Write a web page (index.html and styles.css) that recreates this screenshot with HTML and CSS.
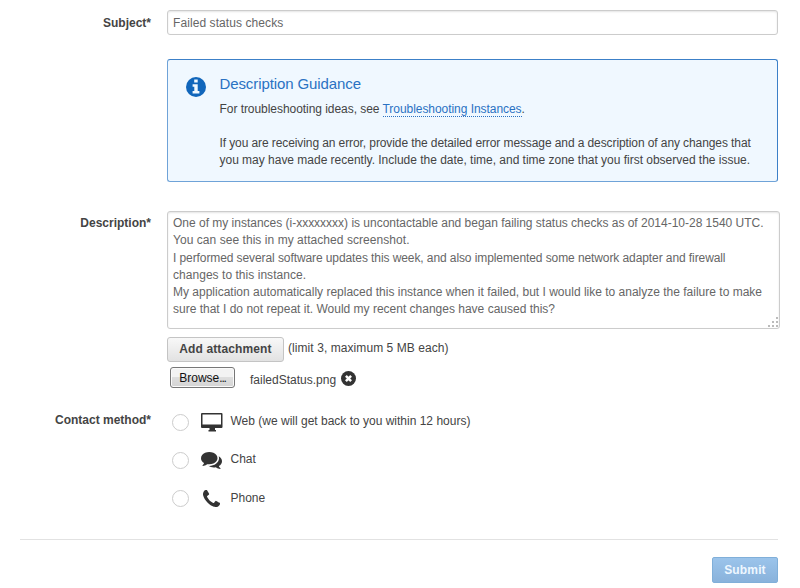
FILE: index.html
```html
<!DOCTYPE html>
<html lang="en">
<head>
<meta charset="utf-8">
<title>Create case</title>
<link rel="stylesheet" href="styles.css">
</head>
<body>
<form class="case-form">
  <div class="row subject-row">
    <label class="label" for="subject">Subject*</label>
    <input class="text-input" id="subject" type="text" value="Failed status checks">
  </div>
  <section class="guidance">
    <svg class="info-icon" viewBox="0 0 20 20"><circle cx="10" cy="10" r="10"/><path fill="#f0f8ff" d="M8.2 2.4h3.5v3.2H8.200zM6.600 7.200h5.100v6.800h1.700v2.600H6.600v-2.600h1.700V9.700H6.600z"/></svg>
    <div class="guidance-body">
      <h2>Description Guidance</h2>
      <p class="ideas">For troubleshooting ideas, see <a href="#">Troubleshooting Instances</a>.</p>
      <p class="hint"><span class="line h1">If you are receiving an error, provide the detailed error message and a description of any changes that</span><span class="line h2">you may have made recently. Include the date, time, and time zone that you first observed the issue.</span></p>
    </div>
  </section>
  <div class="row description-row">
    <div class="label">Description*</div>
    <div class="description">
      <span class="line d1">One of my instances (i-xxxxxxxx) is uncontactable and began failing status checks as of 2014-10-28 1540 UTC.</span>
      <span class="line d2">You can see this in my attached screenshot.</span>
      <span class="line d3">I performed several software updates this week, and also implemented some network adapter and firewall</span>
      <span class="line d4">changes to this instance.</span>
      <span class="line d5">My application automatically replaced this instance when it failed, but I would like to analyze the failure to make</span>
      <span class="line d6">sure that I do not repeat it. Would my recent changes have caused this?</span>
      <svg class="grip" viewBox="0 0 11 11"><path d="M8 0h2v2H8zM4 4h2v2H4zM8 4h2v2H8zM0 8h2v2H0zM4 8h2v2H4zM8 8h2v2H8z"/></svg>
    </div>
  </div>
  <div class="attach">
    <button class="add" type="button">Add attachment</button>
    <span class="limit">(limit 3, maximum 5 MB each)</span>
  </div>
  <div class="file">
    <button class="browse" type="button">Browse<span class="dots">...</span></button>
    <span class="filename">failedStatus.png</span>
    <svg class="remove" viewBox="0 0 15 15"><circle cx="7.5" cy="7.5" r="7.5"/><path d="M4.9 4.9l5.2 5.2M10.1 4.9l-5.2 5.2" stroke="#fff" stroke-width="2.5"/></svg>
  </div>
  <div class="row contact-row">
    <div class="label">Contact method*</div>
    <div class="methods">
      <label class="method"><input type="radio" name="m"><svg class="icon web" viewBox="0 0 22 19"><path fill-rule="evenodd" d="M1 0h19.500q1 0 1 1v13q0 1-1 1h-6.500v2h1v1.500H7.500V17H8.500v-2H1q-1 0-1-1V1q0-1 1-1zM1.500 1.500v10h18.500v-10z"/></svg><span class="web-text">Web (we will get back to you within 12 hours)</span></label>
      <label class="method"><input type="radio" name="m"><svg class="icon chat" viewBox="0 256 1792 1408" preserveAspectRatio="none"><path d="M1408 768q0 139-94 257t-256.5 186.5-353.5 68.5q-86 0-176-16-124 88-278 128-36 9-86 16h-3q-11 0-20.5-8t-11.5-21q-1-3-1-6.5t.5-6.5 2-6l2.5-5 3.5-5.5 4-5 4.5-5 4-4.5q5-6 23-25t26-29.5 22.5-29 25-38.5 20.5-44q-124-72-195-177t-71-224q0-139 94-257t256.5-186.5 353.5-68.5 353.5 68.5 256.5 186.5 94 257zm384 256q0 120-71 224.5t-195 176.5q10 24 20.5 44t25 38.5 22.5 29 26 29.5 23 25q1 1 4 4.5t4.5 5 4 5 3.5 5.5l2.5 5 2 6 .5 6.5-1 6.5q-3 14-13 22t-22 7q-50-7-86-16-154-40-278-128-90 16-176 16-271 0-472-132 58 4 88 4 161 0 309-45t264-129q125-92 192-212t67-254q0-77-23-152 129 71 204 178t75 230z"/></svg><span>Chat</span></label>
      <label class="method"><input type="radio" name="m"><svg class="icon phone" viewBox="0 128 1408 1408"><path d="M1408 1240q0 27-10 70.5t-21 68.5q-21 50-122 106-94 51-186 51-27 0-53-3.500t-57.500-12.500-47-14.500-55.500-20.500-49-18q-98-35-175-83-127-79-264-216t-216-264q-48-77-83-175-3-9-18-49t-20.500-55.500-14.500-47-12.500-57.500-3.500-53q0-92 51-186 56-101 106-122 25-11 68.500-21t70.500-10q14 0 21 3 18 6 53 76 11 19 30 54t35 63.500 31 53.500q3 4 17.500 25t21.500 35.500 7 28.500q0 20-28.500 50t-62 55-62 53-28.500 46q0 9 5 22.500t8.500 20.500 14 24 11.500 19q76 137 174 235t235 174q2 1 19 11.500t24 14 20.500 8.500 22.500 5q18 0 46-28.500t53-62 55-62 50-28.500q14 0 28.500 7t35.500 21.500 25 17.500q25 15 53.500 31t63.500 35 54 30q70 35 76 53 3 7 3 21z"/></svg><span class="phone-text">Phone</span></label>
    </div>
  </div>
  <div class="footer"><button class="submit" type="button">Submit</button></div>
</form>
</body>
</html>
```
FILE: styles.css
```css
* { box-sizing: border-box; }
body {
  margin: 0;
  background: #fff;
  color: #444;
  font: 12px/17.25px "Liberation Sans", Arial, sans-serif;
}
button, input { font: inherit; margin: 0; }
p, h2 { margin: 0; }
svg { display: block; flex: none; }
.case-form { padding: 10px 22px 0 20px; }
.row { display: grid; grid-template-columns: 131px 1fr; column-gap: 16px; }
.label { font-weight: bold; text-align: right; padding-top: 4px; color: #444; }
.subject-row .label { padding-top: 5px; }
.text-input {
  height: 25px;
  width: 611px;
  padding: 0 5px;
  border: 1px solid #ccc;
  border-radius: 3px;
  box-shadow: inset 0 1px 2px #e4e4e4;
  color: #666;
  letter-spacing: 0.08px;
}
.guidance {
  display: flex;
  gap: 14px;
  width: 611px;
  height: 123px;
  margin: 24px 0 0 147px;
  padding: 16px 0 0 18px;
  border: 1px solid #3c80c8;
  border-left-color: #6fa3d8;
  border-bottom-color: #6fa3d8;
  border-radius: 3px;
  background: #f0f8ff;
}
.info-icon { width: 20px; height: 20px; fill: #1166bb; margin-top: 1px; }
.guidance-body { margin-left: -0.5px; }
.guidance h2 { margin-top: -1px; font-size: 15px; line-height: 17px; font-weight: normal; color: #2a72c3; letter-spacing: -0.1px; }
.ideas { margin-top: 9px; letter-spacing: -0.05px; }
.hint { margin-top: 17px; line-height: 17px; }
.h1 { letter-spacing: -0.095px; }
.h2 { letter-spacing: -0.015px; }
.guidance a { color: #2a72c3; text-decoration: none; border-bottom: 1px dotted #2a72c3; }
.line { display: block; white-space: nowrap; }
.description-row { margin-top: 29px; }
.description {
  position: relative;
  width: 613px;
  height: 118px;
  padding: 3px 5px;
  border: 1px solid #ccc;
  border-radius: 3px;
  box-shadow: inset 0 1px 2px #e4e4e4;
  color: #666;
}
.d1 { letter-spacing: -0.01px; }
.d2 { letter-spacing: 0.05px; }
.d3 { letter-spacing: -0.09px; }
.d4 { letter-spacing: 0.04px; }
.grip { position: absolute; right: 0; bottom: 0; width: 11px; height: 11px; fill: #bbb; }
.attach { display: flex; margin: 8px 0 0 147px; }
.add {
  width: 117px;
  height: 25px;
  padding: 0;
  border: 1px solid #c4c4c4;
  border-radius: 3px;
  background: linear-gradient(#f8f8f8, #e2e2e2);
  color: #444;
  font-weight: bold;
  letter-spacing: 0.12px;
}
.limit { margin: 3px 0 0 4px; letter-spacing: 0.07px; }
.file { display: flex; align-items: flex-start; margin: 5px 0 0 150px; }
.browse {
  width: 65px;
  height: 21px;
  padding: 0;
  border: 1px solid #777;
  border-radius: 3px;
  background: linear-gradient(#f3f3f3 50%, #dedede 50%, #d4d4d4);
  box-shadow: inset 0 0 0 1px #fafafa;
  color: #111;
  line-height: 20px;
}
.dots { letter-spacing: -1.2px; }
.filename { margin: 5px 5px 0 15px; }
.remove { width: 15px; height: 15px; margin-top: 4px; fill: #333; }
.contact-row { margin-top: 18px; }
.contact-row .label { padding-top: 5px; }
.methods { display: grid; grid-template-rows: repeat(3, 38px); padding-left: 5px; }
.method { display: grid; grid-template-columns: 17px 22px 1fr; column-gap: 12px; align-items: start; }
.method span { margin: 6px 0 0 -4.5px; }
.method .phone-text { margin-top: 7px; }
.method input {
  appearance: none;
  width: 17px;
  height: 17px;
  margin-top: 7px;
  border: 1px solid #ccc;
  border-radius: 50%;
  background: #fff;
}
.icon { fill: #333; }
.web { width: 22px; height: 19px; margin-top: 6px; }
.chat { width: 21px; height: 17px; margin-top: 7px; }
.phone { width: 17px; height: 17px; margin: 7px 0 0 2px; }
.footer { display: flex; justify-content: flex-end; margin-top: 18px; padding-top: 17px; border-top: 1px solid #e2e2e2; }
.submit {
  width: 66px;
  height: 26px;
  padding: 0;
  border: 1px solid #80afd9;
  border-radius: 2px;
  background: linear-gradient(#9bc4eb, #89b2db);
  color: #eef7ff;
  font-weight: bold;
  line-height: 23px;
  letter-spacing: 0.15px;
}
```
